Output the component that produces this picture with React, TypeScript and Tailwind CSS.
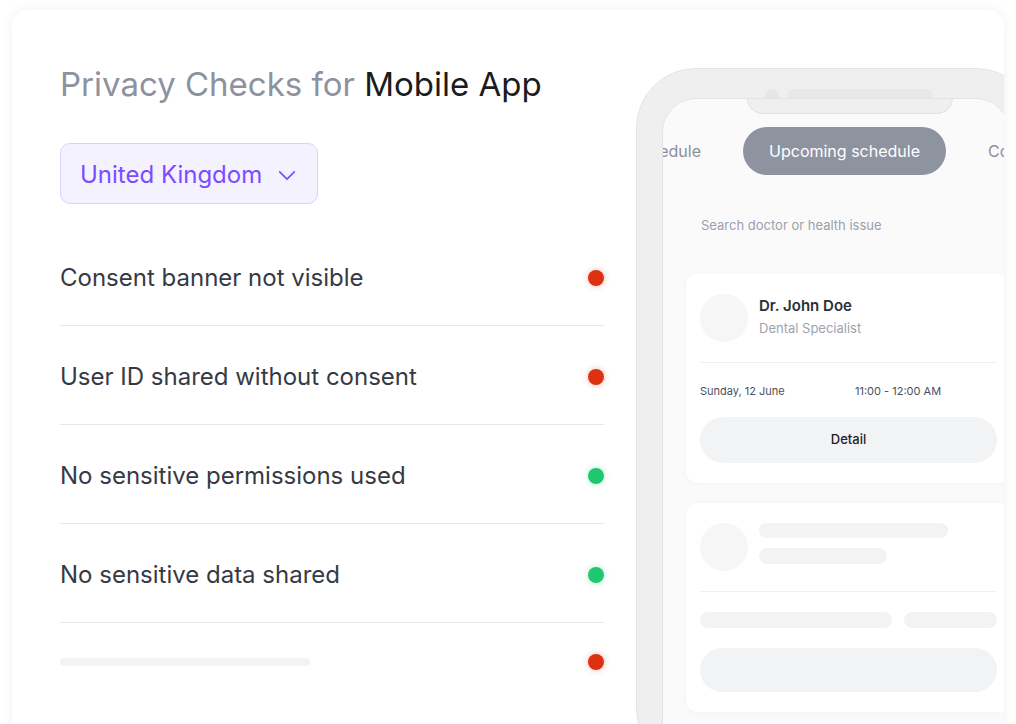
import React from "react";

const checks = [
  { label: "Consent banner not visible", ok: false },
  { label: "User ID shared without consent", ok: false },
  { label: "No sensitive permissions used", ok: true },
  { label: "No sensitive data shared", ok: true },
];

function Dot({ ok }: { ok: boolean }) {
  return ok ? (
    <span className="w-[16px] h-[16px] rounded-full bg-[#1fc870] shadow-[0_0_6px_rgba(31,200,112,0.35)] shrink-0" />
  ) : (
    <span className="w-[16px] h-[16px] rounded-full bg-[#dc3210] shadow-[0_0_6px_rgba(220,50,16,0.35)] shrink-0" />
  );
}

function Phone() {
  return (
    <div className="relative w-[400px] h-[700px] bg-[#efefef] rounded-[60px] border border-[#e4e4e4] pt-[29px] px-[25px]">
      {/* camera + speaker */}
      <div className="absolute top-[20px] left-[128px] w-[14px] h-[14px] rounded-full bg-[#e6e6e6]" />
      <div className="absolute top-[20px] left-[150px] w-[146px] h-[14px] rounded-full bg-[#e8e8e8]" />

      <div className="relative h-full bg-[#fafafa] rounded-t-[34px] border border-[#e3e3e3] overflow-hidden">
        {/* notch */}
        <div className="absolute -top-px left-[84px] w-[206px] h-[16px] bg-[#efefef] rounded-b-[22px] border-x border-b border-[#e3e3e3]" />

        <div className="flex items-center gap-4 ml-[-100px] mt-[28px]">
          <div className="w-[164px] shrink-0 text-right pr-[26px] text-[16px] text-[#8b8f9b] whitespace-nowrap">Past schedule</div>
          <div className="w-[203px] h-[48px] shrink-0 rounded-full bg-[#8e93a0] flex items-center justify-center text-[16px] text-white">
            Upcoming schedule
          </div>
          <div className="shrink-0 pl-[26px] text-[16px] text-[#8b8f9b] whitespace-nowrap">Completed schedule</div>
        </div>

        <div className="ml-[38px] mt-[41px] text-[13px] text-[#9aa0ab]">Search doctor or health issue</div>

        <div className="ml-[23px] mt-[38px] w-[325px] bg-white rounded-[12px] shadow-[0_1px_6px_rgba(0,0,0,0.03)] px-[14px] pt-[20px] pb-[20px]">
          <div className="flex items-center gap-[11px]">
            <div className="w-[48px] h-[48px] rounded-full bg-[#f6f6f7]" />
            <div className="flex flex-col gap-[5px] -mt-[3px]">
              <span className="text-[15px] leading-[18px] font-semibold text-[#2b2e37]">Dr. John Doe</span>
              <span className="text-[13px] leading-[16px] text-[#9ea3ae]">Dental Specialist</span>
            </div>
          </div>
          <div className="h-px bg-[#f0f0f2] mt-[20px]" />
          <div className="flex items-center mt-[20px] text-[11px] leading-[16px] text-[#4b505b]">
            <span className="w-[155px]">Sunday, 12 June</span>
            <span>11:00 - 12:00 AM</span>
          </div>
          <div className="mt-[18px] h-[46px] rounded-full bg-[#f2f3f5] flex items-center justify-center text-[13px] font-medium text-[#1f2128]">
            Detail
          </div>
        </div>

        <div className="ml-[23px] mt-[20px] w-[325px] bg-white rounded-[12px] shadow-[0_1px_6px_rgba(0,0,0,0.03)] px-[14px] pt-[20px] pb-[20px]">
          <div className="flex items-start gap-[11px]">
            <div className="w-[48px] h-[48px] rounded-full bg-[#f6f6f7]" />
            <div className="flex flex-col gap-[10px]">
              <div className="w-[189px] h-[15px] rounded-full bg-[#f2f3f5]" />
              <div className="w-[128px] h-[16px] rounded-full bg-[#f2f3f5]" />
            </div>
          </div>
          <div className="h-px bg-[#f0f0f2] mt-[20px]" />
          <div className="flex items-center gap-[12px] mt-[20px]">
            <div className="w-[192px] h-[16px] rounded-full bg-[#f2f3f5]" />
            <div className="flex-1 h-[16px] rounded-full bg-[#f2f3f5]" />
          </div>
          <div className="mt-[20px] h-[44px] rounded-full bg-[#f2f3f5]" />
        </div>
      </div>
    </div>
  );
}

export default function App() {
  return (
    <div className="w-[1016px] h-[724px] overflow-hidden bg-white pt-[10px] px-[12px] font-['Inter',sans-serif]">
      <div className="h-[740px] bg-white rounded-2xl shadow-[0_0_14px_rgba(0,0,0,0.06)] overflow-hidden flex">
        <div className="w-[592px] shrink-0 pl-[48px] pt-[54px]">
          <h1 className="text-[33px] leading-[40px] text-[#8e929f] whitespace-nowrap">
            Privacy Checks for <span className="text-[#1b1c20]">Mobile App</span>
          </h1>

          <button className="mt-[39px] w-[258px] h-[61px] rounded-[10px] bg-[#f4f2ff] border border-[#d9d1fd] flex items-center pl-[19px] pt-[3px] gap-[14px] text-[24px] text-[#7b4cff]">
            United Kingdom
            <svg width="22" height="22" viewBox="0 0 24 24" fill="none" stroke="currentColor" strokeWidth="1.8" strokeLinecap="round" strokeLinejoin="round">
              <path d="M4 8.5l8 8 8-8" />
            </svg>
          </button>

          <div className="mt-[23px]">
            {checks.map((c) => (
              <div key={c.label} className="h-[99px] pt-[3px] border-b border-[#e7e7ea] flex items-center justify-between">
                <span className="text-[24px] text-[#363a45]">{c.label}</span>
                <Dot ok={c.ok} />
              </div>
            ))}
            <div className="h-[78px] flex items-center justify-between">
              <div className="w-[250px] h-[8px] rounded-full bg-[#f2f3f5]" />
              <Dot ok={false} />
            </div>
          </div>
        </div>

        <div className="pl-[32px] pt-[58px]">
          <Phone />
        </div>
      </div>
    </div>
  );
}
